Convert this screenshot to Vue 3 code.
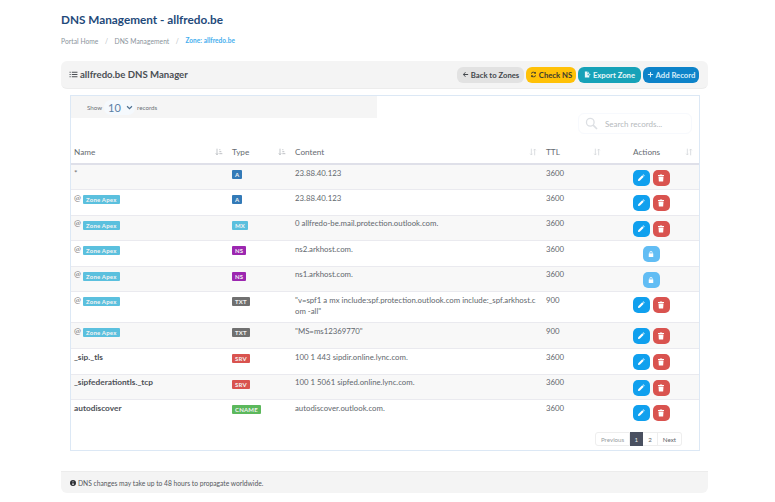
<template>
  <div class="page">
    <h1 class="title">DNS Management - allfredo.be</h1>
    <nav class="crumbs">
      <span>Portal Home</span><i>/</i><span>DNS Management</span><i>/</i><span class="now">Zone: allfredo.be</span>
    </nav>

    <header class="bar">
      <h2>
        <svg class="ico list" viewBox="0 0 16 16"><path d="M1 3h2v2H1zM1 7h2v2H1zM1 11h2v2H1zM5 3.3h10v1.4H5zM5 7.3h10v1.4H5zM5 11.3h10v1.4H5z" /></svg>
        allfredo.be DNS Manager
      </h2>
      <div class="actions">
        <button class="btn back">
          <svg class="ico" viewBox="0 0 16 16"><path d="M7.5 2.5 2 8l5.5 5.5 1.2-1.2L5.3 8.9H14V7.1H5.3l3.4-3.4z" /></svg>
          Back to Zones
        </button>
        <button class="btn check">
          <svg class="ico" viewBox="0 0 16 16"><path d="M13.5 1.5v4.8H8.7l1.9-1.9A4 4 0 0 0 4.2 6.2H2.3a5.8 5.8 0 0 1 9.6-3.1zM2.5 14.5V9.7h4.8l-1.9 1.9a4 4 0 0 0 6.4-1.8h1.9a5.8 5.8 0 0 1-9.6 3.1z" /></svg>
          Check NS
        </button>
        <button class="btn export">
          <svg class="ico" viewBox="0 0 16 16"><path d="M2 1h6v4h4v2.5H8v2h4V15H2zM9 1l3 3H9zM12 6.5 15.5 8.5 12 10.5z" /></svg>
          Export Zone
        </button>
        <button class="btn add">
          <svg class="ico" viewBox="0 0 16 16"><path d="M6.8 2h2.4v4.8H14v2.400H9.200V14H6.800V9.200H2V6.800h4.800z" /></svg>
          Add Record
        </button>
      </div>
    </header>

    <section class="box">
      <div class="tools">
        <div class="length">
          Show
          <span class="select">10
            <svg viewBox="0 0 10 10"><path d="M1.500 3.200 5 6.700l3.500-3.500" fill="none" stroke="#4d6f8f" stroke-width="1.700" /></svg>
          </span>
          records
        </div>
        <div class="search">
          <svg viewBox="0 0 16 16"><circle cx="6.500" cy="6.500" r="4.700" fill="none" stroke="#dcdfe3" stroke-width="1.600" /><path d="m10 10 4.800 4.800" stroke="#dcdfe3" stroke-width="2" /></svg>
          <span>Search records...</span>
        </div>
      </div>

      <table>
        <colgroup>
          <col class="c-name" />
          <col class="c-type" />
          <col class="c-content" />
          <col class="c-ttl" />
          <col />
        </colgroup>
        <thead>
          <tr>
            <th v-for="h in headers" :key="h.label" :class="{ last: h.label === 'Actions' }">
              {{ h.label }}
              <svg class="sort" viewBox="0 0 12 12">
                <template v-if="h.active">
                  <path d="M3 1v9M1.200 8 3 10.200 4.800 8" fill="none" stroke="#aeb2b8" stroke-width="1.100" />
                  <path d="M6.500 2.500h1.500M6.500 5.500h3M6.500 8.500h4.500" stroke="#aeb2b8" stroke-width="1.200" />
                </template>
                <template v-else>
                  <path d="M3.500 1v9.500M8.500 1.500V11" stroke="#d3d6da" stroke-width="1.200" />
                  <path d="M1.700 8.500 3.500 10.500 5.300 8.500M6.700 3.500 8.500 1.500 10.300 3.500" fill="none" stroke="#d3d6da" stroke-width="1" />
                </template>
              </svg>
            </th>
          </tr>
        </thead>
        <tbody>
          <tr v-for="r in rows" :key="r.id">
            <td class="name" :class="{ strong: r.strong }">
              {{ r.name }}
              <span v-if="r.apex" class="tag apex">Zone Apex</span>
            </td>
            <td><span class="tag" :class="r.type.toLowerCase()">{{ r.type }}</span></td>
            <td class="content">{{ r.content }}</td>
            <td>{{ r.ttl }}</td>
            <td class="acts">
              <template v-if="r.locked">
                <span class="act lock">
                  <svg viewBox="0 0 16 16"><path d="M5 7V5a3 3 0 0 1 6 0v2h1.500v7h-9V7zm1.600 0h2.800V5a1.400 1.400 0 0 0-2.800 0z" /></svg>
                </span>
              </template>
              <template v-else>
                <span class="act edit">
                  <svg viewBox="0 0 16 16"><path d="M10.500 2.500 13.500 5.500 5.500 13.500 2 14l.5-3.500zM11.500 1.500l1-1 3 3-1 1z" /></svg>
                </span>
                <span class="act del">
                  <svg viewBox="0 0 16 16"><path d="M6 1h4l.7 1.200H14v1.800H2V2.200h3.300zM3 5h10l-.7 10H3.700z" /></svg>
                </span>
              </template>
            </td>
          </tr>
        </tbody>
      </table>

      <div class="pager">
        <span class="off">Previous</span>
        <span class="on">1</span>
        <span>2</span>
        <span>Next</span>
      </div>
    </section>

    <footer class="note">
      <svg viewBox="0 0 16 16"><path fill-rule="evenodd" d="M8 0a8 8 0 1 1 0 16A8 8 0 0 1 8 0zM6.800 3v2.500h2.400V3zM6 7v1.500h1v3H6V13h4v-1.500H9.200V7z" /></svg>
      DNS changes may take up to 48 hours to propagate worldwide.
    </footer>
  </div>
</template>

<script setup>
const headers = [
  { label: 'Name', active: true },
  { label: 'Type', active: true },
  { label: 'Content' },
  { label: 'TTL' },
  { label: 'Actions' },
];

const rows = [
  { id: 1, name: '*', type: 'A', content: '23.88.40.123', ttl: 3600 },
  { id: 2, name: '@', apex: true, type: 'A', content: '23.88.40.123', ttl: 3600 },
  { id: 3, name: '@', apex: true, type: 'MX', content: '0 allfredo-be.mail.protection.outlook.com.', ttl: 3600 },
  { id: 4, name: '@', apex: true, type: 'NS', content: 'ns2.arkhost.com.', ttl: 3600, locked: true },
  { id: 5, name: '@', apex: true, type: 'NS', content: 'ns1.arkhost.com.', ttl: 3600, locked: true },
  { id: 6, name: '@', apex: true, type: 'TXT', content: '"v=spf1 a mx include:spf.protection.outlook.com include:_spf.arkhost.com -all"', ttl: 900 },
  { id: 7, name: '@', apex: true, type: 'TXT', content: '"MS=ms12369770"', ttl: 900 },
  { id: 8, name: '_sip._tls', strong: true, type: 'SRV', content: '100 1 443 sipdir.online.lync.com.', ttl: 3600 },
  { id: 9, name: '_sipfederationtls._tcp', strong: true, type: 'SRV', content: '100 1 5061 sipfed.online.lync.com.', ttl: 3600 },
  { id: 10, name: 'autodiscover', strong: true, type: 'CNAME', content: 'autodiscover.outlook.com.', ttl: 3600 },
];
</script>

<style>
body { margin: 0; background: #fff; }
</style>

<style scoped>
.page { box-sizing: border-box; width: 775px; height: 502px; overflow: hidden; padding: 12px 67px 0 61px; font-family: "Lato", sans-serif; font-size: 7.8px; color: #5b6168; }
.title { margin: 0; font-size: 11.75px; line-height: 15px; font-weight: 700; color: #1f4a7a; }
.crumbs { display: flex; margin-top: 9px; height: 10px; line-height: 10px; font-size: 6.7px; letter-spacing: 0.05px; color: #8b949c; }
.crumbs i { font-style: normal; margin: 0 6.5px; color: #b5bbc0; }
.crumbs .now { color: #45aeee; font-weight: 700; font-size: 6.5px; }
.bar { display: flex; align-items: center; justify-content: space-between; box-sizing: border-box; height: 28px; margin-top: 15px; padding: 0 9px 0 8px; background: #f4f4f4; border-bottom: 1px solid #ececec; border-radius: 6px; }
.bar h2 { display: flex; align-items: center; gap: 2px; margin: 0; font-size: 9.6px; font-weight: 700; color: #4b4f54; }
.ico { width: 7px; height: 7px; fill: currentColor; flex: none; }
.ico.list { width: 9px; height: 9px; }
.actions { display: flex; gap: 2px; }
.btn { display: flex; align-items: center; justify-content: center; gap: 2px; height: 16px; padding: 0; border: 0; border-radius: 6px; font-family: inherit; font-size: 7.7px; font-weight: 700; }
.back { width: 67px; background: #e2e2e2; color: #43474c; }
.check { width: 50px; background: #ffc107; color: #3c3a2c; }
.export { width: 63px; background: #17a2b8; color: #eaf8fa; }
.add { width: 56px; background: #0d83c9; color: #d8eefa; }
.box { box-sizing: border-box; height: 356px; margin: 6px 8px 0 9px; border: 1px solid #dce8f5; }
.tools { display: flex; justify-content: space-between; height: 45px; }
.length { display: flex; align-items: center; gap: 2px; box-sizing: border-box; width: 306px; height: 22px; padding-left: 16px; background: #f5f5f5; font-size: 6.2px; color: #6c7177; }
.select { display: flex; align-items: center; justify-content: space-between; box-sizing: border-box; width: 31px; height: 15px; padding: 0 2px 0 4px; background: #f5f9fd; border-radius: 7px; font-size: 11px; color: #5b7fa5; }
.select svg { width: 7px; height: 7px; }
.search { display: flex; align-items: center; gap: 7px; box-sizing: border-box; width: 114px; height: 21px; margin: 17px 7px 0 0; padding-left: 6px; border: 1px solid #f7f9fd; border-radius: 6px; font-size: 8px; color: #b5b9bd; }
.search svg { width: 13px; height: 13px; }
table { width: 100%; border-collapse: collapse; table-layout: fixed; }
.c-name { width: 158px; }
.c-type { width: 63px; }
.c-content { width: 251px; }
.c-ttl { width: 64px; }
th { position: relative; height: 22px; padding: 0 3px; border-bottom: 2px solid #dfe0e9; text-align: left; font-weight: 400; font-size: 8.2px; color: #666b71; }
th.last { padding-left: 26px; }
.sort { position: absolute; right: 6px; top: 7px; width: 8px; height: 8px; }
td { box-sizing: border-box; height: 25.6px; padding: 2.5px 4px 5.5px 3px; vertical-align: top; border-bottom: 1px solid #eaeaef; line-height: 11px; font-size: 7.8px; color: #62676d; }
tbody tr:nth-child(odd) td { background: #f8f8f8; }
tbody tr:last-child td { border-bottom: 0; }
td.name { font-size: 8.3px; color: #777; }
td.name.strong { font-weight: 700; color: #4d5157; }
.content { word-break: break-all; }
.tag { display: inline-block; padding: 0 3px; height: 9px; line-height: 9px; border-radius: 1px; vertical-align: -1.5px; font-size: 6px; font-weight: 700; letter-spacing: 0.2px; color: #f3f3f3; }
.apex, .mx { background: #5bc0de; }
.a { background: #337ab7; }
.ns { background: #9c27b0; }
.txt { background: #707070; }
.srv { background: #d9534f; }
.cname { background: #5cb85c; }
td.acts { padding: 5px 7px 0 3px; text-align: center; font-size: 0; }
.act { display: inline-flex; align-items: center; justify-content: center; width: 17px; height: 16px; border-radius: 5px; vertical-align: top; }
.act + .act { margin-left: 3px; }
.act svg { width: 8px; height: 8px; fill: #fff; }
.edit { background: #10a0ee; }
.del { background: #d9534f; }
.lock { background: #62bdf4; }
.pager { display: flex; justify-content: flex-end; height: 14px; margin: 7px 17px 0 0; font-size: 6.2px; color: #5f6469; }
.pager span { display: flex; align-items: center; justify-content: center; padding: 0 5px; border: 1px solid #eee; border-left: 0; background: #fff; }
.pager span:first-child { border-left: 1px solid #eee; border-radius: 3px 0 0 3px; }
.pager span:last-child { border-radius: 0 3px 3px 0; }
.pager .off { color: #9a9ea3; }
.pager .on { width: 13px; box-sizing: border-box; background: #4a5060; border-color: #4a5060; color: #e8e8ea; }
.note { display: flex; align-items: center; gap: 2px; box-sizing: border-box; height: 22px; margin-top: 20px; padding-left: 9px; background: #f4f4f4; border-top: 1px solid #ececec; border-radius: 0 0 6px 6px; font-size: 6.7px; color: #54585d; }
.note svg { width: 6px; height: 6px; fill: #2b2e33; }
</style>
